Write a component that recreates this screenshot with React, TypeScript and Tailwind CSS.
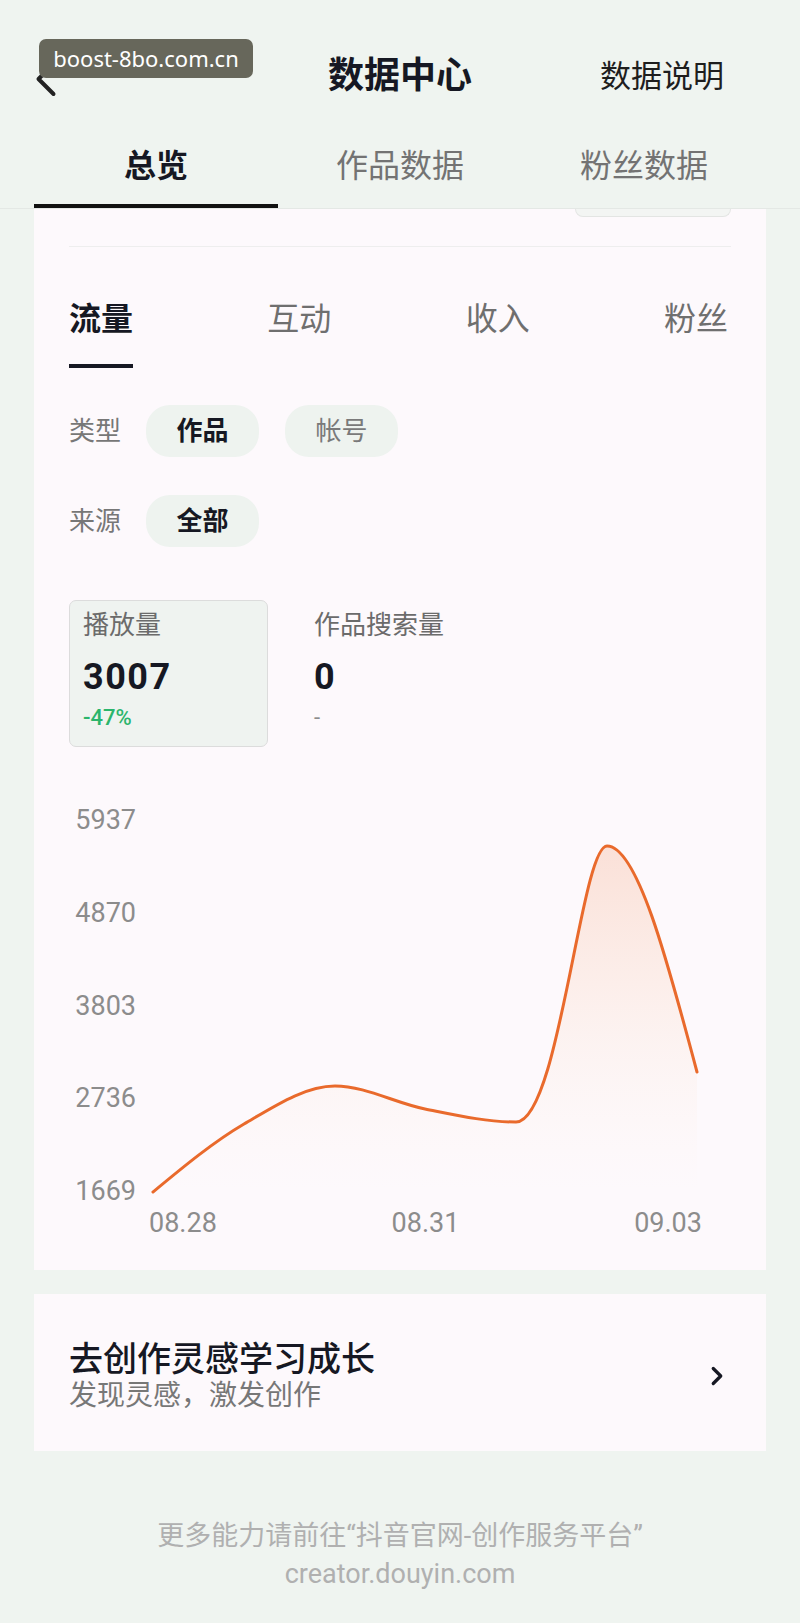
import { ChevronLeft, ChevronRight } from "lucide-react"

const yLabels = ["5937", "4870", "3803", "2736", "1669"]

const linePath =
  "M0 372 C30.3 346.9 60.7 321.7 91 304 C121.3 286.3 151.7 266 182 266 C212 266 242 283 272 289 C302.3 295 332.7 302 363 302 C406 302 428 26 454 26 C484 26 514 139 544 252"

function Pill({ label, active }: { label: string; active?: boolean }) {
  return (
    <div
      className={
        active
          ? "flex h-[52px] w-[113px] items-center justify-center rounded-[24px] bg-[#eef3ef] text-[26px] font-bold text-[#161823]"
          : "flex h-[52px] w-[113px] items-center justify-center rounded-[24px] bg-[#eef3ef] text-[26px] text-[#7a7a7a]"
      }
    >
      {label}
    </div>
  )
}

function TrafficChart() {
  return (
    <div className="mt-[58px]">
      <div className="flex">
        <div className="flex h-[401px] w-[67px] flex-col justify-between text-right text-[27px] leading-[30px] text-[#8c8c8c]">
          {yLabels.map((v) => (
            <span key={v}>{v}</span>
          ))}
        </div>
        <svg
          className="ml-[17px] mt-[15px] overflow-visible"
          width="544"
          height="372"
          viewBox="0 0 544 372"
        >
          <defs>
            <linearGradient id="fill" x1="0" y1="0" x2="0" y2="372" gradientUnits="userSpaceOnUse">
              <stop offset="0" stopColor="#f07a45" stopOpacity="0.22" />
              <stop offset="0.55" stopColor="#f59a5a" stopOpacity="0.08" />
              <stop offset="1" stopColor="#fbd9b0" stopOpacity="0" />
            </linearGradient>
          </defs>
          <path d={linePath + " L544 372 L0 372 Z"} fill="url(#fill)" />
          <path d={linePath} fill="none" stroke="#e96a2c" strokeWidth="3" strokeLinecap="round" />
        </svg>
      </div>
      <div className="ml-[80px] mt-[2px] flex w-[553px] justify-between text-[27px] leading-[30px] text-[#8c8c8c]">
        <span>08.28</span>
        <span>08.31</span>
        <span>09.03</span>
      </div>
    </div>
  )
}

export default function App() {
  return (
    <div className="min-h-[1623px] bg-[#eff4f0] font-['Roboto','Noto_Sans_CJK_SC',sans-serif]">
      {/* header */}
      <header className="relative h-[209px] border-b border-[#e4e8e5] pt-[46px]">
        <div className="relative flex h-[60px] items-center justify-center">
          <ChevronLeft className="absolute left-[16px] top-[3px] h-[60px] w-[60px] text-[#222]" strokeWidth={1.6} />
          <h1 className="text-[36px] font-bold leading-none text-[#161823]">数据中心</h1>
          <span className="absolute right-[76px] text-[31px] leading-none text-[#1e1e1e]">数据说明</span>
        </div>
        <div className="absolute left-[39px] top-[39px] flex h-[39px] w-[214px] items-center justify-center rounded-[7px] bg-[#67675b] font-['Noto_Sans',sans-serif] text-[22px] text-white">
          boost-8bo.com.cn
        </div>
        <nav className="mt-[40px] grid grid-cols-3 px-[34px]">
          <div className="flex flex-col items-center">
            <span className="text-[32px] font-bold leading-[40px] text-[#161823]">总览</span>
            <span className="mt-[18px] h-[4px] w-full bg-[#111]" />
          </div>
          <div className="flex flex-col items-center">
            <span className="text-[32px] leading-[40px] text-[#737373]">作品数据</span>
          </div>
          <div className="flex flex-col items-center">
            <span className="text-[32px] leading-[40px] text-[#737373]">粉丝数据</span>
          </div>
        </nav>
      </header>

      {/* main card */}
      <section className="mx-[34px] bg-[#fdf9fc] px-[35px] pb-[32px]">
        <div className="flex justify-end">
          <div className="h-[8px] w-[156px] rounded-b-[10px] border border-t-0 border-[#e3e5e3] bg-[#f3f5f3]" />
        </div>
        <div className="mt-[29px] h-px bg-[#eeeeee]" />

        <div className="mt-[52px] flex justify-between">
          <div className="flex flex-col">
            <span className="text-[32px] font-bold leading-[40px] text-[#161823]">流量</span>
            <span className="mt-[25px] h-[4px] w-full bg-[#161823]" />
          </div>
          <span className="text-[32px] leading-[40px] text-[#6f6f6f]">互动</span>
          <span className="text-[32px] leading-[40px] text-[#6f6f6f]">收入</span>
          <span className="pr-[3px] text-[32px] leading-[40px] text-[#6f6f6f]">粉丝</span>
        </div>

        <div className="mt-[37px] flex items-center">
          <span className="w-[77px] text-[26px] text-[#777]">类型</span>
          <div className="flex gap-[26px]">
            <Pill label="作品" active />
            <Pill label="帐号" />
          </div>
        </div>
        <div className="mt-[38px] flex items-center">
          <span className="w-[77px] text-[26px] text-[#777]">来源</span>
          <Pill label="全部" active />
        </div>

        <div className="mt-[53px] flex items-start">
          <div className="w-[199px] rounded-[7px] border border-[#dcdcdc] bg-[#eff3f0] pb-[16px] pl-[13px] pt-[7px]">
            <div className="text-[26px] leading-[34px] text-[#6b6b6b]">播放量</div>
            <div className="mt-[13px] text-[36px] font-bold leading-[44px] tracking-[1.5px] text-[#161823]">3007</div>
            <div className="mt-[7px] text-[22px] font-medium leading-[24px] text-[#2bb56c]">-47%</div>
          </div>
          <div className="ml-[46px] pt-[8px]">
            <div className="text-[26px] leading-[34px] text-[#6b6b6b]">作品搜索量</div>
            <div className="mt-[13px] text-[36px] font-bold leading-[44px] text-[#161823]">0</div>
            <div className="mt-[7px] text-[22px] leading-[24px] text-[#8c8c8c]">-</div>
          </div>
        </div>

        <TrafficChart />
      </section>

      {/* inspiration card */}
      <section className="mx-[34px] mt-[24px] flex items-center justify-between bg-[#fdf9fc] pb-[38px] pl-[35px] pr-[34px] pt-[45px]">
        <div>
          <div className="text-[34px] font-medium leading-[40px] text-[#161823]">去创作灵感学习成长</div>
          <div className="text-[28px] leading-[34px] text-[#777]">发现灵感，激发创作</div>
        </div>
        <ChevronRight className="h-[30px] w-[30px] text-[#161823]" strokeWidth={2.6} />
      </section>

      <footer className="mt-[66px] pb-[30px] text-center text-[27px] leading-[38px] text-[#b0b0b0]">
        <div>更多能力请前往“抖音官网-创作服务平台”</div>
        <div>creator.douyin.com</div>
      </footer>
    </div>
  )
}
